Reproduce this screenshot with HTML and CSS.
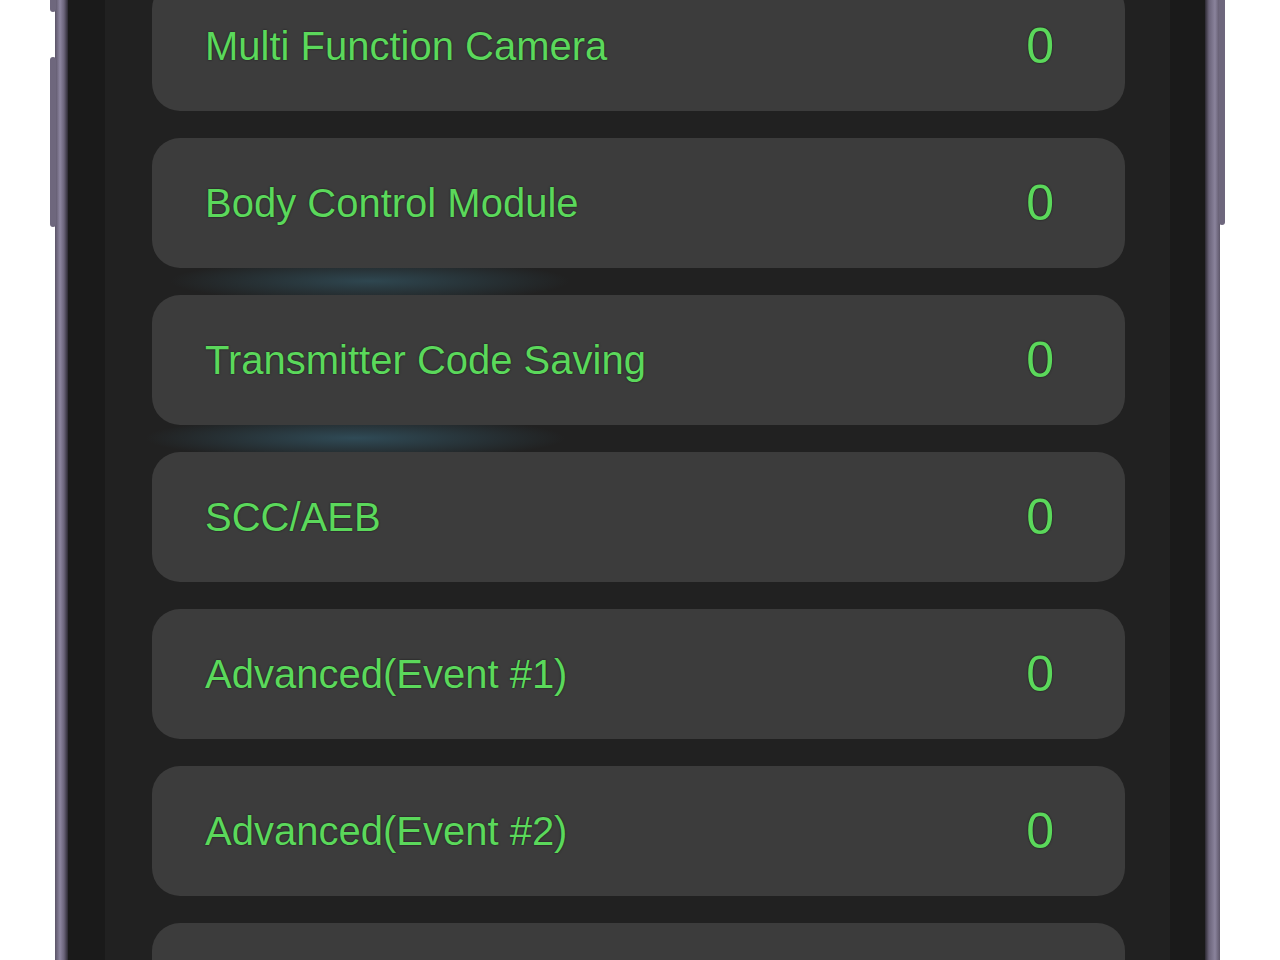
FILE: index.html
```html
<html>
<head>
    <title>Coding Items</title>
    <link rel="stylesheet" href="styles.css">
</head>
<body>
    <div class="page">
        <div class="phone">
            <span class="btn btn-top"></span>
            <span class="btn btn-side"></span>
            <span class="btn btn-right"></span>
            <div class="bezel">
                <div class="screen">
                    <div class="list">
                        <div class="item"><span class="name">Multi Function Camera</span><span class="count">0</span></div>
                        <div class="item"><span class="name">Body Control Module</span><span class="count">0</span></div>
                        <div class="item"><span class="name">Transmitter Code Saving</span><span class="count">0</span></div>
                        <div class="item"><span class="name">SCC/AEB</span><span class="count">0</span></div>
                        <div class="item"><span class="name">Advanced(Event #1)</span><span class="count">0</span></div>
                        <div class="item"><span class="name">Advanced(Event #2)</span><span class="count">0</span></div>
                        <div class="item"><span class="name"></span><span class="count"></span></div>
                    </div>
                </div>
            </div>
        </div>
    </div>
</body>
</html>
```

FILE: styles.css
```css
*{
    margin: 0;
    box-sizing: border-box;
}
body{
    background-color: #ffffff;
    overflow: hidden;
    font-family: 'Liberation Sans', Arial, sans-serif;
}
.page{
    height: 960px;
    padding-left: 55px;
    display: flex;
}
.phone{
    position: relative;
    width: 1165px;
    height: 960px;
    padding: 0 15px 0 13px;
    background: linear-gradient(90deg, #5a5366 0px, #8d86a0 5px, #6b647a 9px, #2c2932 13px, #2c2932 1150px, #6b647a 1154px, #8a839c 1160px, #5d5669 1165px);
}
.btn{
    position: absolute;
    width: 6px;
    background-color: #6e677d;
}
.btn-top{
    left: -5px;
    top: 0;
    height: 12px;
    border-radius: 0 0 3px 3px;
}
.btn-side{
    left: -5px;
    top: 57px;
    height: 170px;
    border-radius: 3px;
}
.btn-right{
    right: -5px;
    top: 0;
    height: 225px;
    border-radius: 0 0 3px 3px;
}
.bezel{
    height: 960px;
    background-color: #1a1a1a;
    padding: 0 35px 0 37px;
}
.screen{
    height: 960px;
    overflow: hidden;
    background-color: #212121;
    padding: 0 45px 0 47px;
    background-image:
        radial-gradient(ellipse 200px 22px at 265px 281px, rgba(50, 80, 92, 0.8), rgba(50, 80, 92, 0) 100%),
        radial-gradient(ellipse 210px 22px at 250px 438px, rgba(50, 82, 96, 0.85), rgba(50, 82, 96, 0) 100%);
}
.list{
    margin-top: -19px;
    display: flex;
    flex-direction: column;
    gap: 27px;
}
.item{
    height: 130px;
    border-radius: 28px;
    background-color: #3c3c3c;
    display: flex;
    align-items: center;
    justify-content: space-between;
    padding: 0 71px 0 53px;
}
.name{
    color: #5bd85b;
    font-size: 40px;
    text-shadow: 0 0 2px rgba(0, 0, 0, 0.7);
}
.count{
    color: #5bd85b;
    font-size: 50px;
    text-shadow: 0 0 2px rgba(0, 0, 0, 0.7);
}
```
